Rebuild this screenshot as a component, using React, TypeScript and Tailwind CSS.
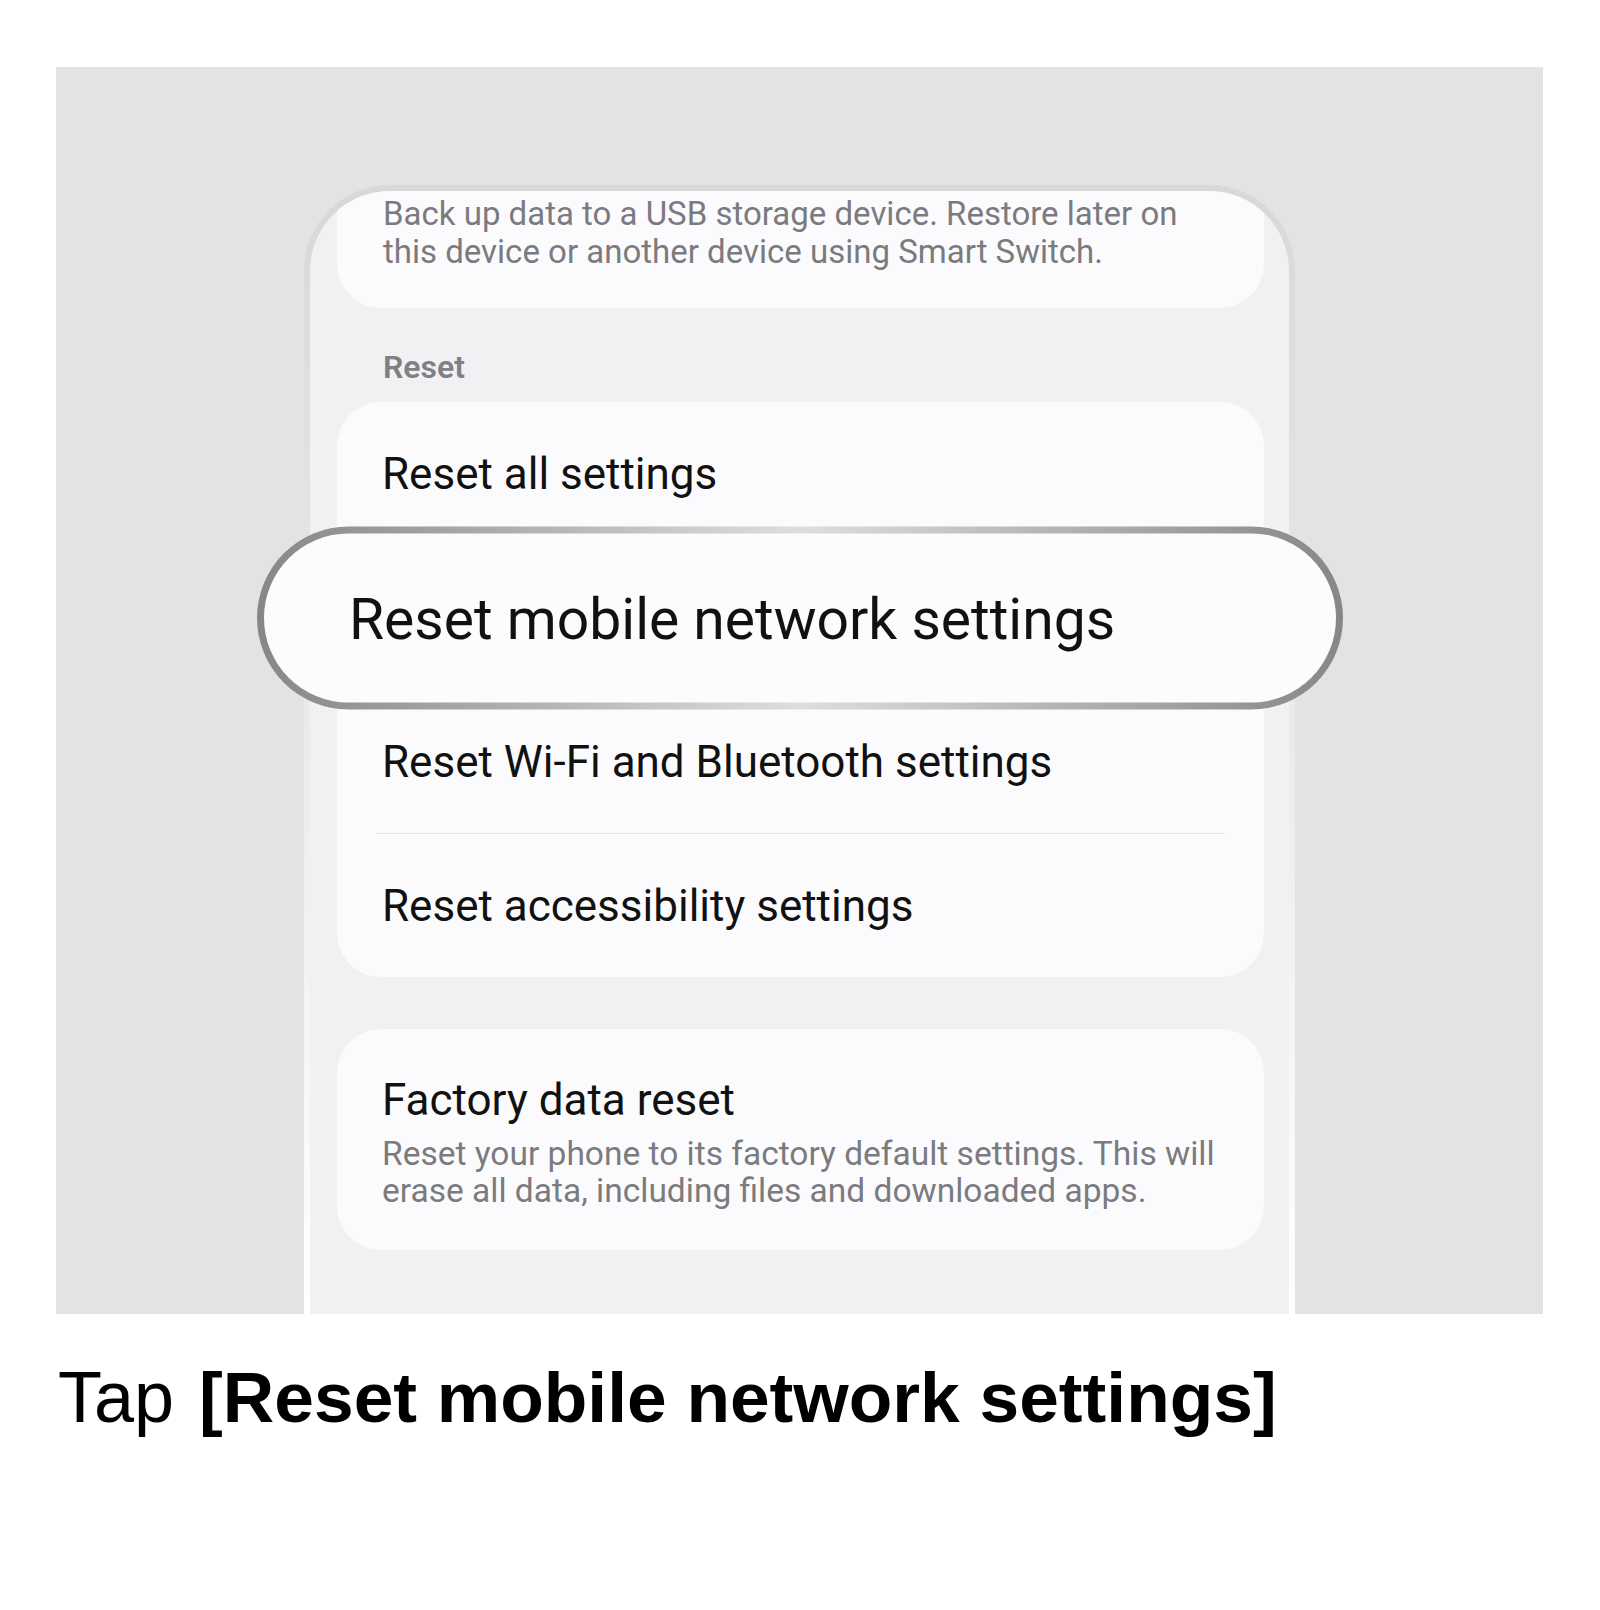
import React from 'react';

const rows = [
  'Reset all settings',
  'Reset mobile network settings',
  'Reset Wi-Fi and Bluetooth settings',
  'Reset accessibility settings',
];

const App: React.FC = () => {
  return (
    <div className="min-h-screen w-full bg-white">
      <div className="ml-[56px] mt-[67px] flex h-[1247px] w-[1487px] justify-center overflow-hidden bg-[#e3e3e3]">
        {/* phone frame */}
        <div className="mt-[118px] w-[991px] rounded-t-[86px] bg-linear-to-b from-[#d8d8d8] to-white px-[6px] pt-[6px]">
          <div className="relative rounded-t-[80px] bg-[#f1f1f3] pb-[300px] font-['Roboto',sans-serif]">
            <div className="overflow-hidden rounded-t-[80px] pl-[27px] pr-[25px]">
              <div className="-mt-[60px] rounded-[44px] bg-[#fbfbfd] pb-[37px] pl-[46px] pr-4 pt-[64px] text-[33px] leading-[38px] text-[#7b7b7f]">
                Back up data to a USB storage device. Restore later on
                <br />
                this device or another device using Smart Switch.
              </div>
            </div>

            <div className="pl-[27px] pr-[25px]">
              <p className="mt-[40px] pl-[46px] text-[32px] font-semibold leading-[38px] text-[#808084]">Reset</p>

              <div className="mt-[16px] rounded-[44px] bg-[#fbfbfd]">
                {rows.map((row, i) => (
                  <React.Fragment key={row}>
                    {i > 0 && <div className="mx-[39px] h-px bg-[#e2e2e4]" />}
                    <div className="relative flex h-[143px] items-center pl-[45px] text-[44px] text-[#111]">
                      {i !== 1 && row}
                      {i === 1 && (
                        <div className="absolute -left-[80px] -right-[79px] top-1/2 z-10 h-[183px] -translate-y-1/2 rounded-full bg-linear-to-r from-[#878787] via-[#dedede] to-[#878787] p-[7px]">
                          <div className="flex h-full items-center rounded-full bg-[#fcfcfd] pl-[85px] pt-[4px] text-[57px] text-[#111]">
                            {row}
                          </div>
                        </div>
                      )}
                    </div>
                  </React.Fragment>
                ))}
              </div>

              <div className="mt-[52px] rounded-[44px] bg-[#fbfbfd] pb-[41px] pl-[45px] pt-[45px]">
                <p className="text-[44px] leading-[52px] text-[#111]">Factory data reset</p>
                <p className="mt-[9px] text-[33.5px] leading-[37px] text-[#7b7b7f]">
                  Reset your phone to its factory default settings. This will
                  <br />
                  erase all data, including files and downloaded apps.
                </p>
              </div>
            </div>
          </div>
        </div>
      </div>

      <p className="mt-[43px] pl-[58px] font-['Liberation_Sans',Arial,sans-serif] text-[72px] leading-[80px] text-black">
        Tap <span className="ml-[5px] text-[71.3px] font-bold">[Reset mobile network settings]</span>
      </p>
    </div>
  );
};

export default App;
